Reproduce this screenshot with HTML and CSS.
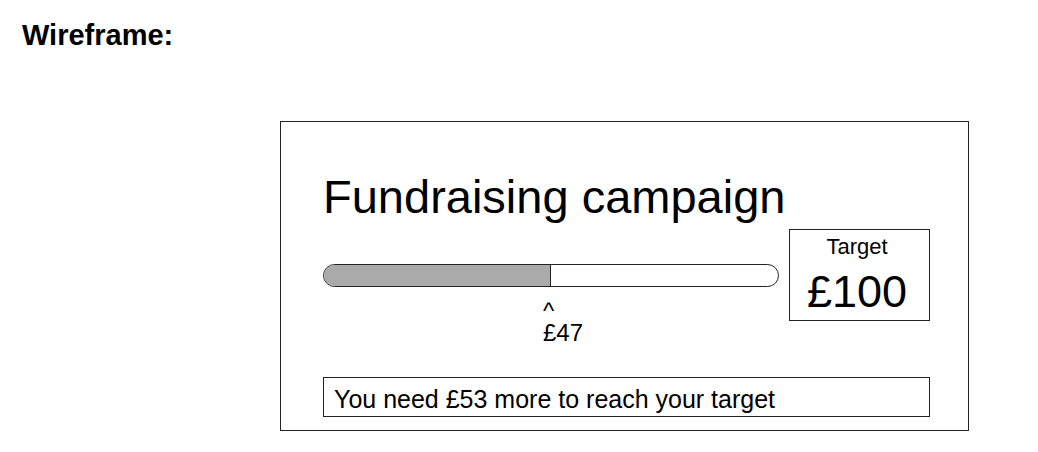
FILE: index.html
```html
<!DOCTYPE html>
<html lang="en">
  <head>
    <meta charset="UTF-8" />
    <meta name="viewport" content="width=device-width, initial-scale=1.0" />
    <title>Wireframe</title>
    <link rel="stylesheet" href="styles.css">
  </head>

  <body>
    <h1 class="page-title">Wireframe:</h1>

    <!-- kartu kampanye -->
    <div class="card">
      <h2 class="card-title">Fundraising campaign</h2>

      <div class="row">
        <div class="progress">
          <div class="bar">
            <div class="fill" style="width: 50%"></div>
          </div>
          <div class="marker" style="margin-left: calc(50% - 8px)">
            <div>^</div>
            <div>£47</div>
          </div>
        </div>

        <div class="target">
          <div class="target-label">Target</div>
          <div class="target-value">£100</div>
        </div>
      </div>

      <div class="message">You need £53 more to reach your target</div>
    </div>
  </body>
</html>
```

FILE: styles.css
```css
body {
  margin: 0;
  font-family: "Liberation Sans", Arial, sans-serif;
  color: #000;
  background: #fff;
}

.page-title {
  margin: 19px 0 0 22px;
  font-size: 29px;
  font-weight: bold;
  line-height: normal;
}

.card {
  box-sizing: border-box;
  width: 689px;
  margin: 69px 0 0 280px;
  padding: 48px 38px 13px 42px;
  border: 1px solid #222;
}

.card-title {
  margin: 0 0 5px;
  font-size: 47px;
  font-weight: normal;
  line-height: 54px;
}

.row {
  display: flex;
  align-items: flex-start;
  gap: 10px;
}

.progress {
  flex: 1;
}

.bar {
  box-sizing: border-box;
  height: 23px;
  margin-top: 35px;
  border: 1px solid #222;
  border-radius: 12px;
  overflow: hidden;
}

.fill {
  box-sizing: border-box;
  height: 100%;
  background: #aaa;
  border-right: 1px solid #222;
}

.marker {
  margin-top: 13px;
  font-size: 24px;
  line-height: 22px;
}

.target {
  box-sizing: border-box;
  width: 141px;
  padding: 4px 5px 4px 0;
  border: 1px solid #222;
  text-align: center;
}

.target-label {
  margin-bottom: 8px;
  font-size: 22px;
  line-height: 26px;
}

.target-value {
  font-size: 45px;
  line-height: 48px;
}

.message {
  box-sizing: border-box;
  height: 40px;
  margin-top: 33px;
  padding: 4px 10px 0;
  border: 1px solid #222;
  font-size: 25px;
  line-height: 34px;
}
```
